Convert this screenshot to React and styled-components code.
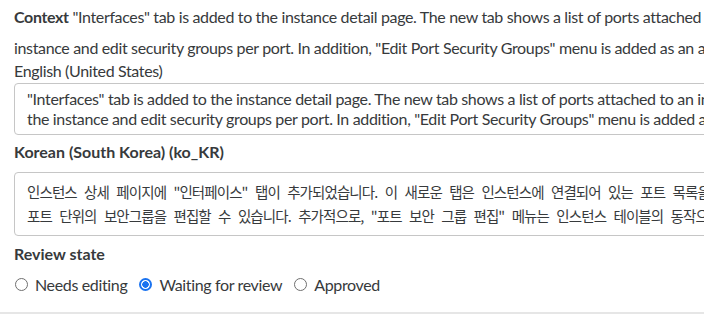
import React from "react";
import styled, { createGlobalStyle } from "styled-components";

const GlobalStyle = createGlobalStyle`
  html, body {
    margin: 0;
    padding: 0;
    background: #ffffff;
    overflow: hidden;
  }
  body {
    font-family: "Lato", "Noto Sans CJK KR", sans-serif;
    color: #373a3c;
  }
`;

const Page = styled.div`
  width: 704px;
  height: 314px;
  overflow: hidden;
  border-bottom: 2px solid #e6e6e6;
  box-sizing: border-box;
`;

const Content = styled.div`
  width: 1100px;
  padding: 2px 0 0 14px;
  box-sizing: border-box;
  font-size: 16px;
  letter-spacing: -0.35px;
`;

const Line = styled.div`
  white-space: nowrap;
  line-height: ${(p) => p.$lh || 24}px;
  margin-top: ${(p) => p.$mt || 0}px;
`;

const Bold = styled.span`
  font-weight: 700;
`;

const Label = styled.div`
  font-weight: ${(p) => (p.$bold ? 700 : 400)};
  letter-spacing: ${(p) => (p.$bold ? "0" : "-0.35px")};
  line-height: 22px;
  margin-top: ${(p) => p.$mt || 0}px;
  white-space: nowrap;
`;

const TextBox = styled.div`
  border: 1px solid #c6c6c6;
  border-radius: 4px;
  padding: ${(p) => p.$pad}px 12px;
  margin-top: ${(p) => p.$mt || 0}px;
  line-height: ${(p) => p.$lh}px;
  white-space: nowrap;
  overflow: hidden;
`;

const Korean = styled.span`
  font-family: "Noto Sans CJK KR", sans-serif;
  font-size: 14.5px;
  letter-spacing: -0.9px;
  word-spacing: 5px;
`;

const RadioRow = styled.div`
  display: flex;
  align-items: center;
  gap: 11px;
  margin-top: 5px;
  height: 28px;
`;

const Option = styled.label`
  display: flex;
  align-items: center;
  gap: 7px;
`;

const Radio = styled.input.attrs({ type: "radio", name: "review" })`
  appearance: none;
  margin: 0 0 0 1px;
  width: 13px;
  height: 13px;
  border-radius: 50%;
  border: 1px solid #6f6f6f;
  background: #fff;
  box-sizing: border-box;

  &:checked {
    border: 2px solid #1a73f0;
    background: radial-gradient(circle, #1a73f0 0 3px, #fff 3.5px);
  }
`;

export default function App() {
  return (
    <>
      <GlobalStyle />
      <Page>
        <Content>
          <Line $lh={30}>
            <Bold>Context</Bold> "Interfaces" tab is added to the instance detail page. The new
            tab shows a list of ports attached to an instance and allows users to see
          </Line>
          <Line $mt={4}>
            instance and edit security groups per port. In addition, "Edit Port Security Groups"
            menu is added as an action of the instance table.
          </Line>
          <Label>English (United States)</Label>
          <TextBox $mt={1} $pad={5} $lh={20}>
            <div>
              "Interfaces" tab is added to the instance detail page. The new tab shows a list of
              ports attached to an instance and allows users to see ports attached to
            </div>
            <div>
              the instance and edit security groups per port. In addition, "Edit Port Security
              Groups" menu is added as an action of the instance table.
            </div>
          </TextBox>
          <Label $bold $mt={6}>
            Korean (South Korea) (ko_KR)
          </Label>
          <TextBox $mt={9} $pad={7} $lh={24}>
            <div>
              <Korean>
                인스턴스 상세 페이지에 "인터페이스" 탭이 추가되었습니다. 이 새로운 탭은 인스턴스에
                연결되어 있는 포트 목록을 보여주며
              </Korean>
            </div>
            <div>
              <Korean>
                포트 단위의 보안그룹을 편집할 수 있습니다. 추가적으로, "포트 보안 그룹 편집" 메뉴는
                인스턴스 테이블의 동작으로 추가되었습니다.
              </Korean>
            </div>
          </TextBox>
          <Label $bold $mt={7}>
            Review state
          </Label>
          <RadioRow>
            <Option>
              <Radio />
              Needs editing
            </Option>
            <Option>
              <Radio defaultChecked />
              Waiting for review
            </Option>
            <Option>
              <Radio />
              Approved
            </Option>
          </RadioRow>
        </Content>
      </Page>
    </>
  );
}
